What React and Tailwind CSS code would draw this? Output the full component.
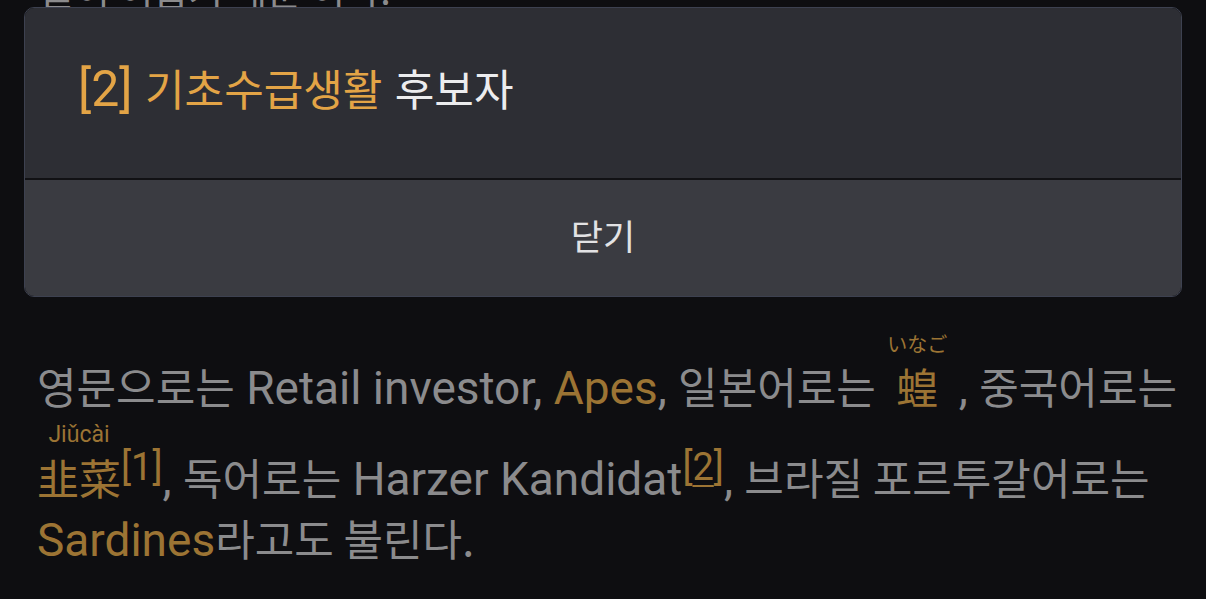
import React from "react";

const latin = { fontFamily: "Roboto, 'Noto Sans CJK KR', sans-serif" };
const hangul = { fontFamily: "'Noto Sans CJK KR', sans-serif" };

function H({ children, className = "" }) {
  return (
    <span className={"text-[43px] " + className} style={hangul}>
      {children}
    </span>
  );
}

function Orange({ children }) {
  return <span className="text-[#9c7434]">{children}</span>;
}

function Ruby({ base, note, jp }) {
  return (
    <ruby
      className="text-[42px] text-[#9c7434]"
      style={{ fontFamily: jp ? "'Noto Sans CJK JP', sans-serif" : "'Noto Sans CJK SC', sans-serif" }}
    >
      {base}
      <rt
        className={"relative text-[#9c7434] " + (jp ? "-top-[12px] text-[20px]" : "-top-[10px] text-[23px]")}
        style={{ fontFamily: jp ? "'Noto Sans CJK JP', sans-serif" : "Roboto, sans-serif" }}
      >
        {note}
      </rt>
    </ruby>
  );
}

function Ref({ n, underline }) {
  return (
    <span className="relative -top-[15px] text-[38px] text-[#9c7434]">
      [<span className={underline ? "underline underline-offset-[5px] decoration-2" : ""}>{n}</span>]
    </span>
  );
}

function Line({ children, className = "" }) {
  return (
    <div className={"h-[64px] whitespace-nowrap text-[46px] leading-[64px] " + className}>{children}</div>
  );
}

export default function App() {
  return (
    <div className="h-[599px] w-[1206px] overflow-hidden bg-[#0e0e11]" style={latin}>
      <div className="h-[7px] overflow-hidden pl-[40px]">
        <div className="-mt-[33px] text-[38px] leading-[44px] text-[#8b8b8d]" style={hangul}>
          들이 이롭기 때문 이다.
        </div>
      </div>

      <div className="mx-[24px] overflow-hidden rounded-[10px] border border-[#3d4150]">
        <div className="h-[170px] bg-[#2d2e34] px-[53px] pt-[54px]">
          <div className="h-[50px] whitespace-nowrap text-[50px] leading-[50px] text-[#e3a446]">
            [2] <H>기초수급생활</H> <H className="text-[#ececee]">후보자</H>
          </div>
        </div>
        <div className="h-[2px] bg-[#111114]" />
        <div className="flex h-[116px] items-center justify-center bg-[#3a3b41] pb-[6px]">
          <span className="text-[35px] text-[#e2e2e4]" style={hangul}>
            닫기
          </span>
        </div>
      </div>

      <div className="mt-[49px] pl-[37px] text-[#8b8b8d]">
        <Line>
          <H>영문으로는</H> Retail investor, <Orange>Apes</Orange>, <H>일본어로는</H> <Ruby base="蝗" note="いなご" jp />{" "}
          , <H>중국어로는</H>
        </Line>
        <Line className="mt-[24px]">
          <Ruby base="韭菜" note="Jiǔcài" />
          <Ref n="1" />, <H>독어로는</H> Harzer Kandidat<Ref n="2" underline />, <H>브라질 포르투갈어로는</H>
        </Line>
        <Line className="mt-[7px]">
          <Orange>Sardines</Orange>
          <H>라고도 불린다.</H>
        </Line>
      </div>
    </div>
  );
}
